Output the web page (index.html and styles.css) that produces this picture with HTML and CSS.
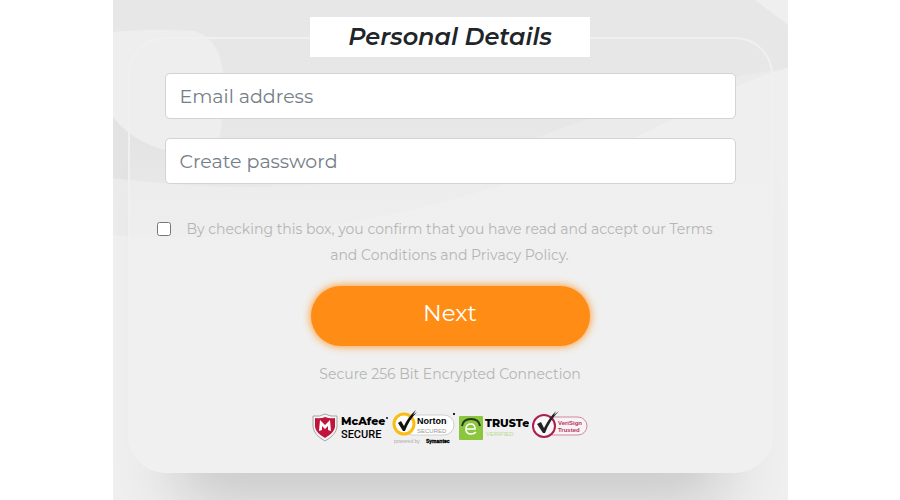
FILE: index.html
```html
<!DOCTYPE html>
<html lang="en">
<head>
  <meta charset="UTF-8" />
  <meta name="viewport" content="width=device-width, initial-scale=1" />
  <title>Personal Details</title>
  <link rel="stylesheet" href="styles.css">
</head>
<body>
  <main class="stage">
    <!-- Background shapes -->
    <svg class="backdrop" viewBox="0 0 675 500" preserveAspectRatio="none" aria-hidden="true">
      <path d="M642 0H675V25Z" fill="#efefef" />
      <path d="M0 117C22 142 55 153 108 165L170 190H0Z" fill="#e3e3e3" />
      <path d="M0 178C180 200 290 180 424 137C500 110 600 78 675 68V500H0Z" fill="#ebebeb" />
      <path d="M0 235C130 245 290 220 392 183L522 137C570 116 620 82 675 68V500H0Z" fill="#efefef" />
      <path d="M0 32C30 29 60 30 81 31C99 36 109 52 110 76C110 100 110 120 106 140L62 152C35 148 12 133 0 117Z" fill="#eeeeee" />
    </svg>

    <form class="card">
      <h2 class="title">Personal Details</h2>

      <div class="fields">
        <input class="field" type="email" placeholder="Email address" aria-label="Email address">
        <input class="field" type="password" placeholder="Create password" aria-label="Create password">
      </div>

      <div class="terms">
        <input type="checkbox" id="terms">
        <label for="terms">By checking this box, you confirm that you have read and accept our Terms and Conditions and Privacy Policy.</label>
      </div>

      <button class="next" type="button">Next</button>
      <p class="secure">Secure 256 Bit Encrypted Connection</p>

      <!-- Trust seals -->
      <div class="seals">
        <svg width="77" height="36" viewBox="0 0 77 36">
          <path d="M1 7Q8 8 13 5Q19 8 25 7V18Q24 26 13 32Q2 26 1 18Z" fill="#f5f5f5" stroke="#a5a5a5" />
          <path d="M3 9Q9 10 13 8Q18 10 23 9V18Q22 24 13 29Q4 24 3 18Z" fill="#c0143c" />
          <path d="M7 22L8 11L13 16L18 11L19 22L16 21V17L13 20L10 17V21Z" fill="#fff" />
          <text class="seal-mcafee" x="29" y="16">McAfee</text>
          <circle cx="75" cy="9" r="1" fill="#111" />
          <text class="seal-secure" x="29" y="29">SECURE</text>
        </svg>
        <svg width="64" height="36" viewBox="0 0 64 36">
          <rect x="10" y="6" width="52" height="20" rx="10" fill="#fff" stroke="#d0d0d0" />
          <circle cx="12" cy="15" r="10" fill="#fff" stroke="#f9bd13" stroke-width="3" />
          <path d="M6 14L9 12L12 17Q16 8 24 1L21 6L25 3Q17 11 13 22H11Z" fill="#111" />
          <text class="seal-norton" x="25" y="15">Norton</text>
          <path d="M61 5H63" stroke="#222" stroke-width="2" />
          <text class="seal-secured" x="25" y="24">SECURED</text>
          <text class="seal-powered" x="2" y="34">powered by</text>
          <text class="seal-symantec" x="34" y="34">Symantec</text>
        </svg>
        <svg width="70" height="36" viewBox="0 0 70 36">
          <rect x="0" y="7" width="24" height="24" rx="1" fill="#8cc63f" />
          <path d="M3 17Q4 10 12 10Q20 10 21 17" fill="none" stroke="#26381c" stroke-width="2" />
          <path d="M8 20H16Q16 15 12 15Q7 15 7 20Q7 25 12 25Q15 25 17 23" fill="none" stroke="#fff" stroke-width="1.6" />
          <text class="seal-truste" x="26" y="18">TRUSTe</text>
          <text class="seal-verified" x="27" y="27">VERIFIED</text>
        </svg>
        <svg width="57" height="36" viewBox="0 0 57 36">
          <rect x="12" y="8" width="43" height="18" rx="9" fill="#f7f3f4" stroke="#cf8a9f" />
          <circle cx="12" cy="17" r="11" fill="#f8f8f8" stroke="#ab1f4d" stroke-width="2" />
          <path d="M5 15L9 13L12 19Q17 9 24 2L22 6L27 2Q18 11 13 24H11Z" fill="#222" />
          <text class="seal-verisign" x="26" y="16">VeriSign</text>
          <text class="seal-verisign" x="26" y="23">Trusted</text>
        </svg>
      </div>
    </form>
  </main>
</body>
</html>
```
FILE: styles.css
```css
:root {
  --accent-color: #ff8c14;
  --muted-color: #b5b5b5;
  --placeholder-color: #757e87;
  --font-family: Montserrat, Inter, sans-serif;
}

* {
  box-sizing: border-box;
}

body {
  margin: 0;
  background-color: #fff;
  font-family: var(--font-family);
}

/* Stage with the soft grey backdrop */
.stage {
  position: relative;
  width: 75%;
  min-height: 100vh;
  margin: 0 auto;
  padding: 37px 15px 27px;
  background-color: #e7e7e7;
  overflow: hidden;
}
.backdrop {
  position: absolute;
  top: 0;
  left: 0;
  width: 100%;
  height: 100%;
}

/* Card */
.card {
  position: relative;
  display: flex;
  flex-direction: column;
  align-items: center;
  padding: 0 35px 26px;
  border: 2px solid #f0f0f0;
  border-radius: 38px;
  background: linear-gradient(rgba(240, 240, 240, 0) 20%, #f0f0f0 60%);
  box-shadow: 0 80px 60px -50px rgba(0, 0, 0, 0.16);
}
.title {
  margin: -22px 0 16px;
  padding: 0 38px;
  background-color: #fff;
  color: #212529;
  font-size: 24px;
  font-style: italic;
  font-weight: 600;
  line-height: 40px;
}

/* Inputs */
.fields {
  display: flex;
  flex-direction: column;
  gap: 19px;
  width: 100%;
}
.field {
  width: 100%;
  height: 46px;
  padding: 0 14px;
  border: 1px solid #d3d3d3;
  border-radius: 5px;
  background-color: #fff;
  font-family: inherit;
  font-size: 19px;
}
.field::placeholder {
  color: var(--placeholder-color);
}

/* Terms */
.terms {
  display: flex;
  align-items: flex-start;
  gap: 9px;
  width: 100%;
  margin: 32px 0 18px;
}
.terms input {
  width: 14px;
  height: 14px;
  margin: 6px 0 0 -8px;
}
.terms label {
  flex: 1;
  padding-right: 16px;
  color: var(--muted-color);
  font-size: 14px;
  line-height: 26px;
  text-align: center;
}

/* Button */
.next {
  width: 279px;
  max-width: 100%;
  height: 60px;
  padding: 0 0 6px;
  border: none;
  border-radius: 30px;
  background-color: var(--accent-color);
  box-shadow: 0 0 8px var(--accent-color);
  color: #fff;
  font-family: inherit;
  font-size: 23px;
  cursor: pointer;
}
.secure {
  margin: 15px 0 22px;
  color: var(--muted-color);
  font-size: 14px;
  line-height: 26px;
}

/* Trust seals */
.seals {
  display: flex;
  flex-wrap: wrap;
  justify-content: center;
  gap: 3px;
}
.seals text {
  font-family: "Liberation Sans", sans-serif;
}
.seals .seal-mcafee {
  font-family: var(--font-family);
  font-size: 11px;
  font-weight: 800;
}
.seals .seal-secure {
  font-family: Roboto, sans-serif;
  font-size: 11px;
  font-weight: 500;
}
.seals .seal-norton {
  font-size: 9px;
  font-weight: 700;
}
.seals .seal-secured {
  fill: #999;
  font-size: 6px;
}
.seals .seal-powered {
  fill: #aaa;
  font-size: 5px;
}
.seals .seal-symantec {
  font-size: 5px;
  font-weight: 700;
  stroke: #000;
  stroke-width: 0.3;
}
.seals .seal-truste {
  font-family: var(--font-family);
  font-size: 11px;
  font-weight: 800;
}
.seals .seal-verified {
  fill: #b9dc90;
  font-size: 6px;
}
.seals .seal-verisign {
  fill: #b5345e;
  font-size: 6px;
  font-weight: 700;
}
```
